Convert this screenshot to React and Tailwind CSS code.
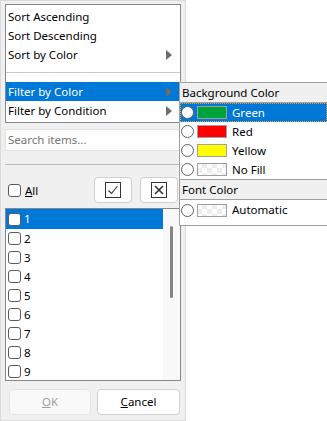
import React from "react";

const Arrow = () => (
  <svg width="6" height="10" viewBox="0 0 6 10" className="block">
    <path d="M0 0 L6 5 L0 10 Z" fill="#6d6d6d" />
  </svg>
);

const Checker = () => (
  <svg width="30" height="13" viewBox="0 0 30 13" className="block">
    <rect x="0" y="0" width="30" height="13" fill="#ffffff" />
    {[0, 1, 2].map((r) =>
      [0, 1, 2, 3, 4, 5].map((c) =>
        (r + c) % 2 === 1 ? (
          <rect key={r + "-" + c} x={c * 5} y={r * 5} width="5" height="5" fill="#ececec" />
        ) : null
      )
    )}
    <rect x="0.5" y="0.5" width="29" height="12" fill="none" stroke="#a0a0a0" />
  </svg>
);

const Radio = () => (
  <span className="block w-[13px] h-[13px] rounded-full border border-[#606060] bg-white shrink-0" />
);

const Swatch = ({ color }) =>
  color ? (
    <span className="block w-[30px] h-[13px] border border-[#a0a0a0] shrink-0" style={{ backgroundColor: color }} />
  ) : (
    <Checker />
  );

const Box = () => (
  <span className="block w-[13px] h-[13px] rounded-[3px] border border-[#5a5a5a] bg-white shrink-0" />
);

export default function App() {
  const menu = [
    { label: "Sort Ascending" },
    { label: "Sort Descending" },
    { label: "Sort by Color", arrow: true },
  ];
  const colors = [
    { label: "Green", color: "#00a33a", active: true },
    { label: "Red", color: "#ff0000" },
    { label: "Yellow", color: "#ffff00" },
    { label: "No Fill" },
  ];
  const items = ["1", "2", "3", "4", "5", "6", "7", "8", "9"];

  return (
    <div
      className="relative w-[327px] h-[421px] bg-white text-[11.5px] text-black overflow-hidden"
      style={{ fontFamily: '"Noto Sans", "Open Sans", sans-serif' }}
    >
      <div className="w-[186px] h-[421px] bg-[#f0f0f0] border border-[#d9d9d9] pl-[4px] pr-[4px] pt-[3px] flex flex-col">
        {/* menu */}
        <div className="w-[176px] h-[119px] bg-white border border-[#828790] pt-[2px]">
          {menu.map((m) => (
            <div key={m.label} className="h-[19px] flex items-center justify-between pl-[2px] pr-[8px]">
              <span>{m.label}</span>
              {m.arrow && <Arrow />}
            </div>
          ))}
          <div className="mt-[8px] mb-[9px] h-px bg-[#c9c9c9]" />
          <div className="h-[19px] flex items-center justify-between pl-[2px] pr-[8px] bg-[#0078d7] text-white">
            <span>Filter by Color</span>
            <Arrow />
          </div>
          <div className="h-[19px] flex items-center justify-between pl-[2px] pr-[8px]">
            <span>Filter by Condition</span>
            <Arrow />
          </div>
        </div>

        {/* search */}
        <div className="mt-[6px] w-[176px] h-[22px] bg-white border border-[#e3e3e3] flex items-center pl-[2px] text-[#767676]">
          Search items...
        </div>

        <div className="mt-[13px] w-[176px] h-px bg-[#b9b9b9]" />

        {/* all row */}
        <div className="mt-[12px] h-[26px] flex items-center">
          <div className="flex items-center gap-[4px] pl-[3px] pt-[1px]">
            <Box />
            <span>
              <span className="underline">A</span>ll
            </span>
          </div>
          <button className="ml-[56px] w-[38px] h-[26px] rounded-[4px] border border-[#d0d0d0] bg-[#fdfdfd] flex items-center justify-center">
            <svg width="16" height="16" viewBox="0 0 16 16">
              <rect x="0.5" y="0.5" width="15" height="15" fill="none" stroke="#333" />
              <path d="M3.5 8.5 L6.5 11.5 L12.5 4" fill="none" stroke="#333" strokeWidth="1.1" />
            </svg>
          </button>
          <button className="ml-[8px] w-[38px] h-[26px] rounded-[4px] border border-[#d0d0d0] bg-[#fdfdfd] flex items-center justify-center">
            <svg width="16" height="16" viewBox="0 0 16 16">
              <rect x="0.5" y="0.5" width="15" height="15" fill="none" stroke="#333" />
              <path d="M4 4 L12 12 M12 4 L4 12" fill="none" stroke="#333" strokeWidth="1.6" />
            </svg>
          </button>
        </div>

        {/* list */}
        <div className="mt-[5px] w-[176px] h-[173px] bg-white border border-[#828790] flex">
          <div className="w-[157px]">
            {items.map((it, i) => (
              <div
                key={it}
                className={
                  "flex items-center gap-[3px] pl-[2px] " +
                  (i === 0 ? "bg-[#0078d7] text-white h-[20px]" : "h-[19px]")
                }
              >
                <Box />
                <span>{it}</span>
              </div>
            ))}
          </div>
          <div className="flex-1 bg-[#f8f8f8] flex justify-center pt-[17px]">
            <div className="w-[3px] h-[72px] rounded-full bg-[#858585]" />
          </div>
        </div>

        {/* buttons */}
        <div className="mt-[8px] flex gap-[6px] pl-[4px]">
          <button className="w-[82px] h-[26px] rounded-[4px] border border-[#e5e5e5] bg-[#f9f9f9] text-[#a0a0a0]">
            <span className="underline">O</span>K
          </button>
          <button className="w-[83px] h-[26px] rounded-[4px] border border-[#d0d0d0] bg-white text-black">
            <span className="underline">C</span>ancel
          </button>
        </div>
      </div>

      {/* submenu */}
      <div className="absolute left-[179px] top-[82px] w-[149px] bg-white border border-[#a0a0a0] pb-[5px]">
        <div className="h-[20px] bg-[#f0f0f0] border-b border-[#a0a0a0] flex items-center pl-[2px]">
          Background Color
        </div>
        {colors.map((c) => (
          <div
            key={c.label}
            className={
              "h-[19px] flex items-center pl-[1px] " +
              (c.active ? "bg-[#0078d7] text-white outline outline-1 outline-dotted outline-[#f0a030] -outline-offset-1" : "")
            }
          >
            <Radio />
            <span className="ml-[3px]">
              <Swatch color={c.color} />
            </span>
            <span className="ml-[5px]">{c.label}</span>
          </div>
        ))}
        <div className="h-[21px] bg-[#f0f0f0] border-y border-[#a0a0a0] flex items-center pl-[2px]">
          Font Color
        </div>
        <div className="h-[20px] flex items-center pl-[1px]">
          <Radio />
          <span className="ml-[3px]">
            <Checker />
          </span>
          <span className="ml-[5px]">Automatic</span>
        </div>
      </div>
    </div>
  );
}
